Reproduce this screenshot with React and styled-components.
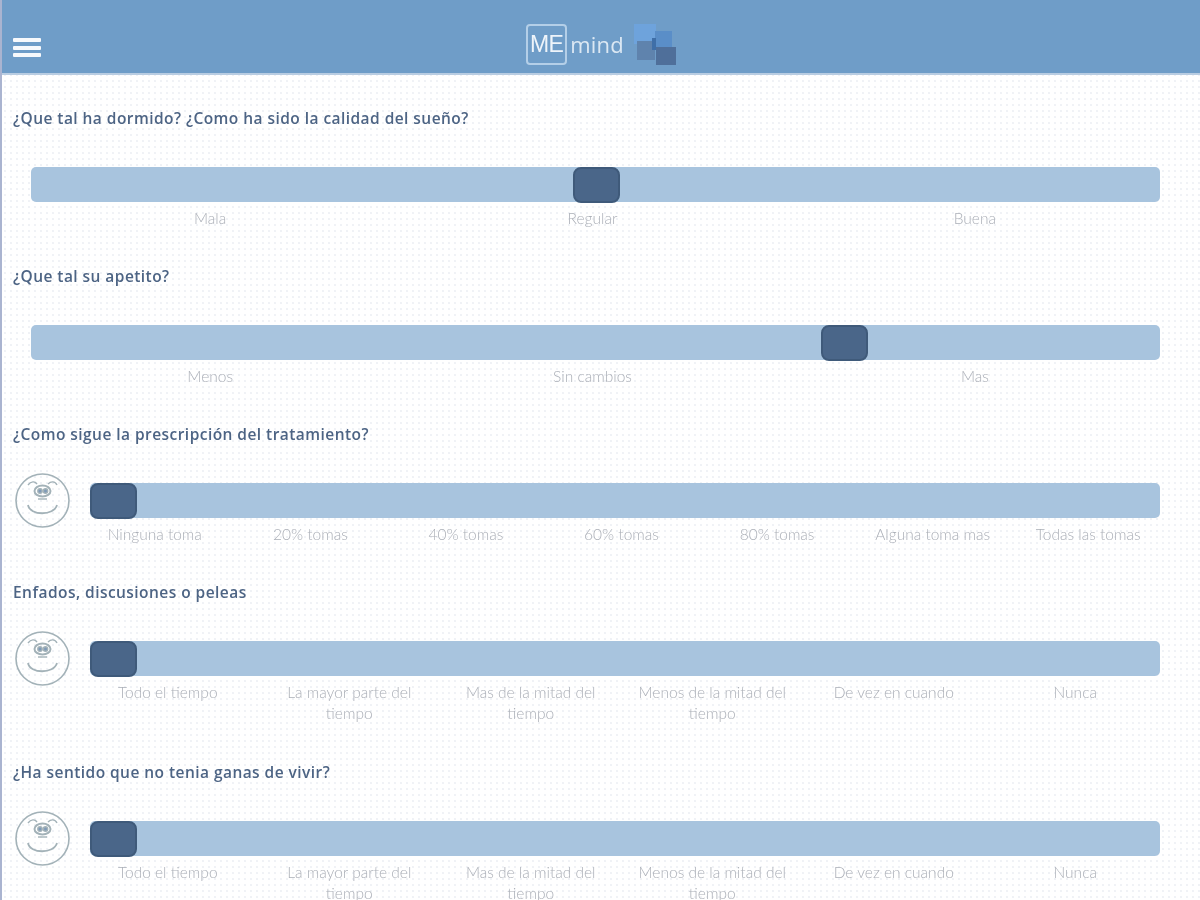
import React from 'react';
import styled, { createGlobalStyle } from 'styled-components';

const GlobalStyle = createGlobalStyle`
  html, body {
    margin: 0;
    padding: 0;
    height: 100%;
    overflow: hidden;
    background: #fff;
  }
`;

const Page = styled.div`
  height: 900px;
  overflow: hidden;
  border-left: 2px solid #aab4d0;
  background-color: #fff;
  background-image: radial-gradient(circle, #f0f2f6 0.7px, transparent 1px);
  background-size: 6px 6px;
  filter: blur(0.5px);
`;

const Header = styled.header`
  height: 73px;
  margin-left: -2px;
  border-left: 2px solid #5f8cba;
  border-bottom: 2px solid #b9cde2;
  background: #6f9dc8;
  display: grid;
  grid-template-columns: 1fr auto 1fr;
  align-items: center;
`;

const Burger = styled.button`
  justify-self: start;
  margin: 22px 0 0 11px;
  padding: 0;
  width: 28px;
  display: flex;
  flex-direction: column;
  gap: 3.5px;
  background: none;
  border: 0;

  span {
    height: 4px;
    background: #f7f9fc;
    border-radius: 1px;
  }
`;

const Logo = styled.div`
  display: flex;
  align-items: center;
  transform: translateX(1px);
`;

const LogoBox = styled.div`
  width: 37px;
  height: 37px;
  margin-top: 16px;
  border: 2px solid #b4cfe8;
  border-radius: 4px;
  display: flex;
  align-items: center;
  justify-content: center;
  color: #eef4fa;
  font: 400 23px/1 'Liberation Sans', sans-serif;
  letter-spacing: -0.5px;
`;

const LogoWord = styled.span`
  margin: 15px 0 0 3px;
  color: #dce8f3;
  font: 400 22px/1 'Open Sans', sans-serif;
  letter-spacing: 0.2px;
`;

const LogoMark = styled.svg`
  margin: 17px 0 0 10px;
  display: block;
`;

const Section = styled.section`
  padding: 33px 0 ${(p) => p.$bottom}px;
`;

const Question = styled.h2`
  margin: 0 0 39px 11px;
  color: #4d6484;
  font: 600 15.5px/20px 'Open Sans', sans-serif;
  letter-spacing: 0.45px;
`;

const SliderRow = styled.div`
  display: flex;
  align-items: center;
  gap: 20px;
  padding: 0 40px 0 ${(p) => (p.$face ? 13 : 29)}px;
  height: 35.5px;
`;

const FaceIcon = styled.svg`
  flex: none;
  display: block;
`;

const Track = styled.div`
  position: relative;
  flex: 1;
  height: 35px;
  background: #a8c4de;
  border-radius: 5px;
`;

const Thumb = styled.div`
  position: absolute;
  top: 0;
  width: 47px;
  height: 36px;
  box-sizing: border-box;
  background: #4a6689;
  border: 2px solid #3f5a7a;
  border-radius: 8px;
`;

const Labels = styled.div`
  display: grid;
  grid-template-columns: repeat(${(p) => p.$count}, 1fr);
  margin: 5px 34px 0 ${(p) => (p.$face ? 75 : 17)}px;
`;

const Label = styled.span`
  padding: 0 12px;
  text-align: center;
  color: #abafb7;
  font: 300 15.5px/21.5px 'Lato', sans-serif;
`;

const Face = () => (
  <FaceIcon width="55" height="55" viewBox="0 0 55 55" fill="none" stroke="#a3b2b8" strokeWidth="1.4">
    <circle cx="27.5" cy="27.5" r="26.5" strokeWidth="1.6" />
    <path d="M13 12c3-4 7-4 9-1M33 11c3-3 7-3 9 1" />
    <ellipse cx="27.5" cy="18" rx="8" ry="5.5" strokeWidth="2" />
    <circle cx="25" cy="18" r="2.2" fill="#7f9ab8" />
    <circle cx="30.5" cy="18" r="2.2" fill="#7f9ab8" />
    <path d="M23 26h9" />
    <path d="M13 32c2 11 26 11 29 0" strokeWidth="1.8" />
  </FaceIcon>
);

const sentiment = ['Todo el tiempo', 'La mayor parte del tiempo', 'Mas de la mitad del tiempo', 'Menos de la mitad del tiempo', 'De vez en cuando', 'Nunca'];

const questions = [
  { text: '¿Que tal ha dormido? ¿Como ha sido la calidad del sueño?', thumb: 542, labels: ['Mala', 'Regular', 'Buena'] },
  { text: '¿Que tal su apetito?', thumb: 790, labels: ['Menos', 'Sin cambios', 'Mas'] },
  { text: '¿Como sigue la prescripción del tratamiento?', thumb: 0, face: true, labels: ['Ninguna toma', '20% tomas', '40% tomas', '60% tomas', '80% tomas', 'Alguna toma mas', 'Todas las tomas'] },
  { text: 'Enfados, discusiones o peleas', thumb: 0, face: true, labels: sentiment },
  { text: '¿Ha sentido que no tenia ganas de vivir?', thumb: 0, face: true, labels: sentiment },
];

const App = () => (
  <Page>
    <GlobalStyle />
    <Header>
      <Burger aria-label="Menu">
        <span />
        <span />
        <span />
      </Burger>
      <Logo>
        <LogoBox>ME</LogoBox>
        <LogoWord>mind</LogoWord>
        <LogoMark width="44" height="42" viewBox="0 0 44 42">
          <rect x="0" y="0" width="22" height="20" fill="#6ea3dc" />
          <rect x="21" y="7" width="17" height="16" fill="#5a8ec8" />
          <rect x="3" y="17" width="18" height="19" fill="#5f83ad" />
          <rect x="22" y="23" width="20" height="18" fill="#4f6f9a" />
          <rect x="18" y="14" width="4" height="12" fill="#3f6fa8" />
        </LogoMark>
      </Logo>
      <span />
    </Header>
    {questions.map((q) => (
      <Section key={q.text} $bottom={q.labels.length === 6 ? 4.5 : 4}>
        <Question>{q.text}</Question>
        <SliderRow $face={q.face}>
          {q.face && <Face />}
          <Track>
            <Thumb style={{ left: q.thumb }} />
          </Track>
        </SliderRow>
        <Labels $count={q.labels.length} $face={q.face}>
          {q.labels.map((label) => (
            <Label key={label}>{label}</Label>
          ))}
        </Labels>
      </Section>
    ))}
  </Page>
);

export default App;
